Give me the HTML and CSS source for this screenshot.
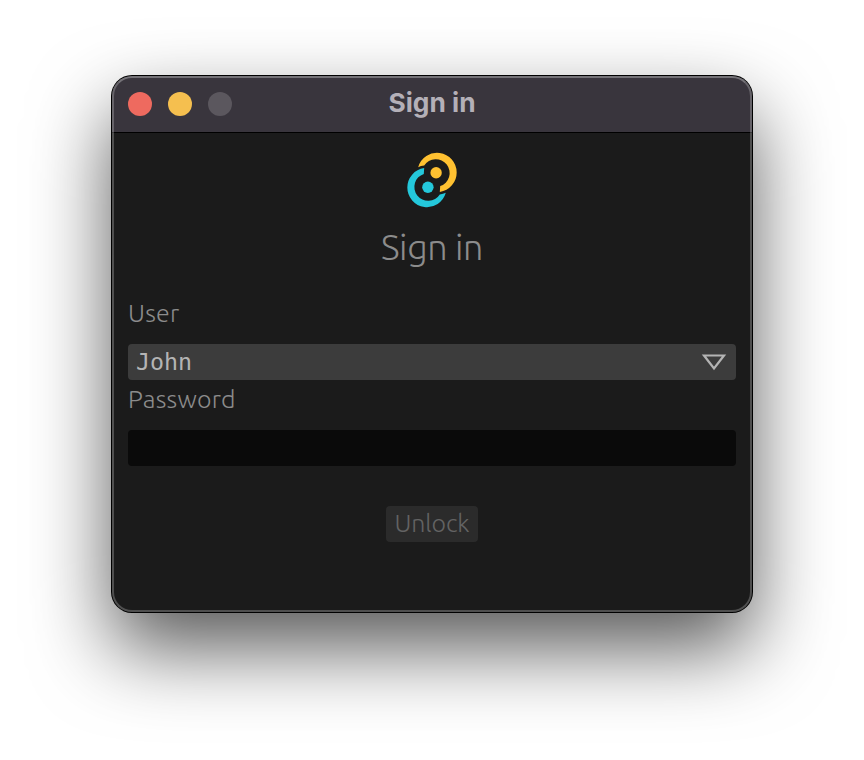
FILE: index.html
```html
<!DOCTYPE html>
<html lang="en">
<head>
<meta charset="utf-8">
<title>Sign in</title>
<link rel="stylesheet" href="styles.css">
</head>
<body>
<main class="window">
  <header class="titlebar">
    <div class="controls"><i class="close"></i><i class="minimize"></i><i class="expand"></i></div>
    <span class="title">Sign in</span>
  </header>
  <form class="content">
    <svg class="logo" viewBox="0 0 64 64" aria-hidden="true">
      <g fill="#ffc131"><path d="M18.2 19.2 A19.6 19.6 0 1 1 39.8 43.9 L40.2 38.1 A13.8 13.8 0 1 0 24.2 17.6 Q20.8 17.9 18.2 19.2Z"/><circle cx="36.1" cy="24.8" r="5.7"/></g>
      <g fill="#24c8db" transform="rotate(180 32 32)"><path d="M18.2 19.2 A19.6 19.6 0 1 1 39.8 43.9 L40.2 38.1 A13.8 13.8 0 1 0 24.2 17.6 Q20.8 17.9 18.2 19.2Z"/><circle cx="36.1" cy="24.8" r="5.7"/></g>
    </svg>
    <h1 class="heading">Sign in</h1>
    <span class="label user-label">User</span>
    <div class="select"><span>John</span>
      <svg class="arrow" viewBox="0 0 26 20" aria-hidden="true"><path d="M3 3.5H23L13 16.5Z"/></svg>
    </div>
    <label class="label password-label" for="password">Password</label>
    <input class="password" id="password" type="password">
    <button class="unlock" type="button" disabled>Unlock</button>
  </form>
</main>
</body>
</html>
```

FILE: styles.css
```css
* { box-sizing: border-box; }
body {
  margin: 0;
  height: 760px;
  padding-top: 76px;
  background: #fff;
  overflow: hidden;
  font-family: "Ubuntu", "Noto Sans", sans-serif;
  font-weight: 300;
}
.window {
  position: relative;
  width: 640px;
  height: 536px;
  margin: 0 auto;
  border-radius: 20px;
  background: #1b1b1b;
  box-shadow: 0 0 0 1px #000, 0 36px 80px rgba(0, 0, 0, .66);
}
.window::after {
  content: "";
  position: absolute;
  inset: 0;
  border: 2px solid rgba(255, 255, 255, .23);
  border-top-color: rgba(255, 255, 255, .3);
  border-radius: 20px;
  pointer-events: none;
}
.titlebar {
  display: grid;
  grid-template-columns: 1fr auto 1fr;
  align-items: center;
  height: 57px;
  padding: 0 16px;
  border-bottom: 1px solid #000;
  border-radius: 20px 20px 0 0;
  background: #39353d;
}
.controls { display: flex; gap: 16px; }
.controls i { width: 24px; height: 24px; border-radius: 50%; }
.close { background: #ee6a5f; }
.minimize { background: #f5bf4f; }
.expand { background: #5b575e; }
.title {
  font: 700 26.3px/30px Inter, sans-serif;
  color: #b4b0b8;
  padding-bottom: 3px;
}
.content {
  display: flex;
  flex-direction: column;
  align-items: center;
  padding: 15px 16px 0;
}
.logo { width: 64px; height: 64px; }
.heading {
  margin: 13px 0 0;
  font-size: 36px;
  font-weight: 300;
  line-height: 44px;
  letter-spacing: -.4px;
  color: #8c8c8c;
}
.label {
  align-self: flex-start;
  font-size: 25px;
  line-height: 30px;
  color: #8c8c8c;
}
.user-label { margin-top: 29px; letter-spacing: .2px; }
.select {
  display: flex;
  align-items: center;
  justify-content: space-between;
  width: 100%;
  height: 36px;
  margin-top: 16px;
  padding: 0 9px 0 8px;
  border-radius: 4px;
  background: #3c3c3c;
  color: #b4b4b4;
  font: 400 23.3px/36px "DejaVu Sans Mono", monospace;
}
.arrow { width: 26px; height: 20px; fill: none; stroke: #b4b4b4; stroke-width: 2.2; }
.password-label { margin-top: 4px; letter-spacing: .2px; }
.password {
  width: 100%;
  height: 36px;
  margin-top: 16px;
  border: 0;
  border-radius: 4px;
  background: #0a0a0a;
}
.unlock {
  width: 92px;
  height: 36px;
  margin-top: 40px;
  padding: 0 0 2px;
  border: 0;
  border-radius: 4px;
  background: #2b2b2b;
  color: #636363;
  font: inherit;
  font-size: 25px;
  line-height: 34px;
  letter-spacing: -.1px;
}
```
